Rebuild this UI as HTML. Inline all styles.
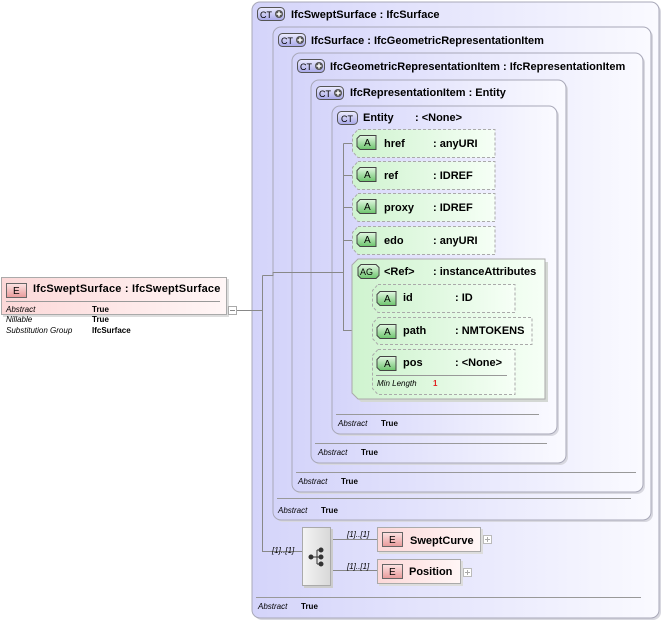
<!DOCTYPE html>
<html><head><meta charset="utf-8"><style>
html,body{margin:0;padding:0;background:#fff;width:663px;height:621px;overflow:hidden}
svg{display:block}
text{font-family:"Liberation Sans",sans-serif}
.t{font-size:11px;font-weight:bold;fill:#000}
.ab{font-size:8px;font-style:italic;fill:#000}
.tr{font-size:8px;font-weight:bold;fill:#000}
</style></head><body>
<svg width="663" height="621" viewBox="0 0 663 621" xmlns="http://www.w3.org/2000/svg">
<defs>
<linearGradient id="ct" x1="0" x2="1" y1="0" y2="0"><stop offset="0" stop-color="#d4d4fa"/><stop offset="1" stop-color="#fafaff"/></linearGradient>
<linearGradient id="grn" x1="0" x2="1"><stop offset="0" stop-color="#cff3cf"/><stop offset="1" stop-color="#f6fff6"/></linearGradient>
<linearGradient id="badA" x1="0" x2="0" y1="0" y2="1"><stop offset="0" stop-color="#e4f8e4"/><stop offset="1" stop-color="#6cc46c"/></linearGradient>
<linearGradient id="badCT" x1="0" x2="0" y1="0" y2="1"><stop offset="0" stop-color="#eeeeff"/><stop offset="1" stop-color="#a8a8e8"/></linearGradient>
<linearGradient id="badE" x1="0" x2="0" y1="0" y2="1"><stop offset="0" stop-color="#fde4e4"/><stop offset="1" stop-color="#e89a9a"/></linearGradient>
<linearGradient id="el" x1="0" x2="1"><stop offset="0" stop-color="#fcd8d8"/><stop offset="1" stop-color="#fff6f6"/></linearGradient>
<linearGradient id="sq" x1="0" x2="1"><stop offset="0" stop-color="#f4f4f4"/><stop offset="1" stop-color="#d8d8d8"/></linearGradient>
</defs>

<rect x="254" y="4" width="407" height="616" rx="8" fill="#d8d8e0"/>
<rect x="252" y="2" width="407" height="616" rx="8" fill="url(#ct)" stroke="#a8a8b8"/>
<rect x="275" y="29" width="378" height="493" rx="8" fill="#d8d8e0"/>
<rect x="273" y="27" width="378" height="493" rx="8" fill="url(#ct)" stroke="#a8a8b8"/>
<rect x="294" y="55" width="351" height="439" rx="8" fill="#d8d8e0"/>
<rect x="292" y="53" width="351" height="439" rx="8" fill="url(#ct)" stroke="#a8a8b8"/>
<rect x="313" y="82" width="255" height="383" rx="8" fill="#d8d8e0"/>
<rect x="311" y="80" width="255" height="383" rx="8" fill="url(#ct)" stroke="#a8a8b8"/>
<rect x="334" y="108" width="225" height="328" rx="8" fill="#d8d8e0"/>
<rect x="332" y="106" width="225" height="328" rx="8" fill="url(#ct)" stroke="#a8a8b8"/>

<g stroke="#999" stroke-width="1">
<line x1="256" y1="597.5" x2="641" y2="597.5"/>
<line x1="277" y1="498.5" x2="631" y2="498.5"/>
<line x1="296" y1="472.5" x2="636" y2="472.5"/>
<line x1="315" y1="443.5" x2="547" y2="443.5"/>
<line x1="336" y1="414.5" x2="539" y2="414.5"/>
</g>

<g stroke="#555" fill="url(#badCT)">
<rect x="257.5" y="7.5" width="27" height="13" rx="4"/>
<rect x="278.5" y="33.5" width="27" height="13" rx="4"/>
<rect x="297.5" y="59.5" width="27" height="13" rx="4"/>
<rect x="316.5" y="86.5" width="27" height="13" rx="4"/>
<rect x="337.5" y="111.5" width="20" height="13" rx="4"/>
</g>
<g font-size="9" fill="#000"><text x="260" y="18">CT</text><text x="281" y="44">CT</text><text x="300" y="70">CT</text><text x="319" y="97">CT</text><text x="341" y="122">CT</text></g>
<g fill="#555"><circle cx="279" cy="14" r="4"/><circle cx="300" cy="40" r="4"/><circle cx="319" cy="66" r="4"/><circle cx="338" cy="93" r="4"/></g>
<g stroke="#fff" stroke-width="1.5"><path d="M276.5 14h5M279 11.5v5M297.5 40h5M300 37.5v5M316.5 66h5M319 63.5v5M335.5 93h5M338 90.5v5"/></g>

<text class="t" x="291" y="18">IfcSweptSurface : IfcSurface</text>
<text class="t" x="311" y="44">IfcSurface : IfcGeometricRepresentationItem</text>
<text class="t" x="330" y="70">IfcGeometricRepresentationItem : IfcRepresentationItem</text>
<text class="t" x="350" y="96">IfcRepresentationItem : Entity</text>
<text class="t" x="363" y="121">Entity</text><text class="t" x="415" y="121">: &lt;None&gt;</text>

<text class="ab" x="258" y="609">Abstract</text><text class="tr" x="301" y="609">True</text>
<text class="ab" x="278" y="513">Abstract</text><text class="tr" x="321" y="513">True</text>
<text class="ab" x="298" y="484">Abstract</text><text class="tr" x="341" y="484">True</text>
<text class="ab" x="318" y="455">Abstract</text><text class="tr" x="361" y="455">True</text>
<text class="ab" x="338" y="426">Abstract</text><text class="tr" x="381" y="426">True</text>

<g stroke="#888" fill="none">
<path d="M236 310.5H262.5M262.5 275.5V551.5H302M262.5 275.5H273V272.5H343.5M343.5 143.5V330.5H372M343.5 143.5H352M343.5 175.5H352M343.5 207.5H352M343.5 240.5H352M362.5 298.5V365.5M362.5 298.5H372M362.5 365.5H372M331 539.5H377M331 570.5H377"/>
</g>

<polygon points="361,262 548,262 548,402 361,402 355,396 355,268" fill="#d4d8d4"/>
<polygon points="358,259 545,259 545,399 358,399 352,393 352,265" fill="url(#grn)" stroke="#aaa"/>
<path d="M361 264.5h15l3 3v8l-3 3h-15l-3-3v-8z" fill="url(#badA)" stroke="#444"/>
<text x="360" y="275" font-size="9">AG</text>
<text class="t" x="384" y="275">&lt;Ref&gt;</text><text class="t" x="433" y="275">: instanceAttributes</text>

<g fill="url(#grn)" stroke="#aaa" stroke-dasharray="3,2">
<polygon points="358,129.5 495,129.5 495,157.5 358,157.5 352.5,151.5 352.5,135.5"/>
<polygon points="358,161.5 495,161.5 495,189.5 358,189.5 352.5,183.5 352.5,167.5"/>
<polygon points="358,193.5 495,193.5 495,221.5 358,221.5 352.5,215.5 352.5,199.5"/>
<polygon points="358,226.5 495,226.5 495,254.5 358,254.5 352.5,248.5 352.5,232.5"/>
<polygon points="378,284.5 515,284.5 515,312.5 378,312.5 372.5,306.5 372.5,290.5"/>
<polygon points="378,317.5 532,317.5 532,344.5 378,344.5 372.5,338.5 372.5,323.5"/>
<polygon points="378,349.5 515,349.5 515,394.5 378,394.5 372.5,388.5 372.5,355.5"/>
</g>
<g fill="url(#badA)" stroke="#444">
<path d="M360 135.5h16v14h-16l-3-3v-8z"/>
<path d="M360 167.5h16v14h-16l-3-3v-8z"/>
<path d="M360 199.5h16v14h-16l-3-3v-8z"/>
<path d="M360 232.5h16v14h-16l-3-3v-8z"/>
<path d="M380 291.5h16v14h-16l-3-3v-8z"/>
<path d="M380 324.5h16v14h-16l-3-3v-8z"/>
<path d="M380 356.5h16v14h-16l-3-3v-8z"/>
</g>
<g font-size="10"><text x="364" y="146">A</text><text x="364" y="178">A</text><text x="364" y="210">A</text><text x="364" y="243">A</text><text x="384" y="302">A</text><text x="384" y="335">A</text><text x="384" y="367">A</text></g>
<text class="t" x="384" y="147">href</text><text class="t" x="433" y="147">: anyURI</text>
<text class="t" x="384" y="179">ref</text><text class="t" x="433" y="179">: IDREF</text>
<text class="t" x="384" y="211">proxy</text><text class="t" x="433" y="211">: IDREF</text>
<text class="t" x="384" y="244">edo</text><text class="t" x="433" y="244">: anyURI</text>
<text class="t" x="403" y="301">id</text><text class="t" x="455" y="301">: ID</text>
<text class="t" x="403" y="334">path</text><text class="t" x="455" y="334">: NMTOKENS</text>
<text class="t" x="403" y="366">pos</text><text class="t" x="455" y="366">: &lt;None&gt;</text>
<line x1="376" y1="375.5" x2="507" y2="375.5" stroke="#999"/>
<text class="ab" x="377" y="386">Min Length</text><text x="433" y="386" font-size="8" font-weight="bold" fill="#e02020">1</text>

<rect x="3" y="279" width="226" height="38" fill="#ddd"/>
<rect x="1.5" y="277.5" width="225" height="37" fill="url(#el)" stroke="#aaa"/>
<rect x="6.5" y="283.5" width="20" height="14" fill="url(#badE)" stroke="#666"/>
<text x="13" y="294" font-size="10">E</text>
<text class="t" x="33" y="292" letter-spacing="0.2">IfcSweptSurface : IfcSweptSurface</text>
<line x1="6" y1="301.5" x2="220" y2="301.5" stroke="#999"/>
<text class="ab" x="6" y="312">Abstract</text><text class="tr" x="92" y="312">True</text>
<text class="ab" x="6" y="322">Nillable</text><text class="tr" x="92" y="322">True</text>
<text class="ab" x="6" y="333">Substitution Group</text><text class="tr" x="92" y="333">IfcSurface</text>
<rect x="228.5" y="306.5" width="8" height="8" fill="#fff" stroke="#aaa"/><line x1="230" y1="310.5" x2="235" y2="310.5" stroke="#888"/>

<text class="ab" x="272" y="553">[1]..[1]</text>
<rect x="304" y="529" width="29" height="59" fill="#ccc"/>
<rect x="302.5" y="527.5" width="28" height="58" fill="url(#sq)" stroke="#aaa"/>
<g fill="#333" stroke="#333"><circle cx="311" cy="557" r="2"/><circle cx="321" cy="550" r="2"/><circle cx="321" cy="557" r="2"/><circle cx="321" cy="564" r="2"/><path d="M311 557h6M317 550v14M317 550h4M317 564h4M317 557h4" fill="none"/></g>

<text class="ab" x="347" y="537">[1]..[1]</text>
<text class="ab" x="347" y="569">[1]..[1]</text>
<rect x="379" y="529" width="104" height="25" fill="#ddd"/>
<rect x="377.5" y="527.5" width="103" height="24" fill="url(#el)" stroke="#aaa"/>
<rect x="382.5" y="532.5" width="20" height="14" fill="url(#badE)" stroke="#666"/>
<text x="389" y="543" font-size="10">E</text>
<text x="410" y="544" font-size="11" font-weight="bold">SweptCurve</text>
<rect x="483.5" y="535.5" width="8" height="8" fill="#fff" stroke="#bbb"/><path d="M485 539.5h5M487.5 537v5" stroke="#aaa"/>
<rect x="379" y="561" width="84" height="25" fill="#ddd"/>
<rect x="377.5" y="559.5" width="83" height="24" fill="url(#el)" stroke="#aaa"/>
<rect x="382.5" y="564.5" width="20" height="14" fill="url(#badE)" stroke="#666"/>
<text x="389" y="575" font-size="10">E</text>
<text x="409" y="575" font-size="11" font-weight="bold">Position</text>
<rect x="463.5" y="568.5" width="8" height="8" fill="#fff" stroke="#bbb"/><path d="M465 572.5h5M467.5 570v5" stroke="#aaa"/>
</svg>
</body></html>
